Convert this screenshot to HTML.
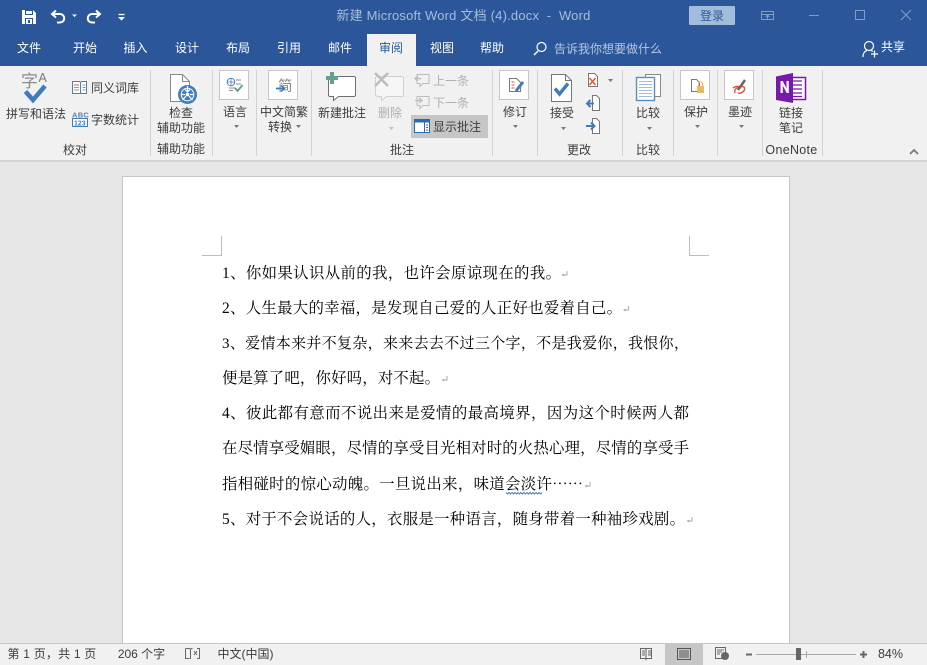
<!DOCTYPE html>
<html lang="zh-CN"><head><meta charset="utf-8"><title>Word</title>
<style>
html,body{margin:0;padding:0;width:927px;height:665px;overflow:hidden;background:#e6e6e6}
body{position:relative;font-family:"Liberation Sans","Noto Sans CJK SC",sans-serif;font-size:12px;color:#3c3c3c}
.b{position:absolute}
.t{position:absolute;transform:translate(-50%,-50%);white-space:nowrap;line-height:16px}
.tab{color:#fff;font-size:12px}
.d{color:#b0b0b0}
.l{position:absolute;left:222px;height:24px;line-height:24px;font-family:"Liberation Serif","Noto Serif CJK SC",serif;font-size:15.4px;color:#000;text-align:justify;text-align-last:justify;white-space:normal;overflow:hidden}
svg{position:absolute;left:0;top:0}
svg text{font-family:"Liberation Sans","Noto Sans CJK SC",sans-serif}
</style></head><body>
<div class="b" style="left:0;top:0;width:927px;height:66px;background:#2b579a"></div>
<div class="b" style="left:367px;top:34px;width:49px;height:32px;background:#f1f1f1"></div>
<div class="b" style="left:0;top:66px;width:927px;height:94px;background:#f1f1f1"></div>
<div class="b" style="left:0;top:160px;width:927px;height:2px;background:#d4d4d4"></div>
<div class="b" style="left:122px;top:176px;width:666px;height:470px;background:#fff;border:1px solid #c6c6c6"></div>
<div class="b" style="left:0;top:643px;width:927px;height:22px;background:#f1f1f1;border-top:1px solid #c6c6c6;box-sizing:border-box"></div>
<div class="b" style="left:665px;top:644px;width:38px;height:21px;background:#c6c6c6"></div>
<div class="b" style="left:411px;top:115px;width:77px;height:23px;background:#c6c6c6"></div>
<div class="b" style="left:689px;top:6px;width:46px;height:19px;background:#a3bcdc;border-radius:1px"></div>

<svg width="927" height="665" viewBox="0 0 927 665" fill="none">
<!-- group separators -->
<g stroke="#d2d2d2"><path d="M150.500 70V156M212.500 70V156M256.500 70V156M311.500 70V156M492.500 70V156M537.500 70V156M622.500 70V156M673.500 70V156M717.500 70V156M762.500 70V156M822.500 70V156"/></g>
<!-- QAT -->
<path d="M22 10h11l3 3v11H22z" fill="#fff"/><rect x="25" y="10" width="8" height="5" fill="#2b579a"/><rect x="26" y="11" width="6" height="3" fill="#fff"/><rect x="25" y="18" width="8" height="6" fill="#2b579a"/><rect x="26" y="19" width="6" height="5" fill="#fff"/><rect x="28" y="20" width="2" height="3" fill="#2b579a"/>
<path d="M56 10.500l-4 3.500 4 3.500M52 14h8a4 4 0 0 1 0 8.500h-3" stroke="#fff" stroke-width="2"/>
<path d="M72 14.500h5l-2.500 2.500z" fill="#fff"/>
<path d="M96 10.500l4 3.500-4 3.500M100 14h-8a4 4 0 0 0 0 8.500h3" stroke="#fff" stroke-width="2"/>
<path d="M118.500 14.500h6" stroke="#fff" stroke-width="1.300"/><path d="M118 17h7l-3.500 3.500z" fill="#fff"/>
<!-- window controls -->
<g stroke="#7f9dc7"><path d="M761.500 11.500h12v8h-12zM761.500 14.500h12M767.500 19v-3M765.500 17l2-2 2 2"/><path d="M809 15.500h10"/><rect x="855.500" y="10.500" width="9" height="9"/><path d="M901 10l10 10M911 10l-10 10"/></g>
<!-- search, user -->
<circle cx="541.500" cy="47" r="4.500" stroke="#fff" stroke-width="1.200"/><path d="M538 51l-4 4" stroke="#fff" stroke-width="1.500"/>
<circle cx="869" cy="46" r="4.500" stroke="#fff" stroke-width="1.200"/><path d="M863 57c0-4 2-6 4-6.500M871 50.500l2 1M871 54h7M874.500 50.500v7" stroke="#fff" stroke-width="1.200"/>
<!-- spell check -->
<text x="21" y="87" font-size="17" fill="#8d8d8d">字</text>
<text x="38.500" y="82" font-size="12.500" fill="#7a7a7a">A</text>
<path d="M25.500 91.500l7.500 8.500 12-14" stroke="#3d7cbe" stroke-width="4.500"/>
<!-- thesaurus -->
<path d="M72.500 81.500h7l1 1 1-1h5v12h-14z" fill="#fff" stroke="#4d82b8"/><path d="M80.500 82v11" stroke="#4d82b8"/>
<path d="M74 85h5" stroke="#d25b3b"/><path d="M74 87.500h5M74 90h5M82.500 85h3M82.500 87.500h3M82.500 90h3" stroke="#999"/>
<!-- word count -->
<text x="72" y="117.500" font-size="7.500" font-weight="bold" fill="#5f7f9f" letter-spacing=".3">ABC</text>
<rect x="72.500" y="118.500" width="15" height="8" fill="#fff" stroke="#3d7cbe"/>
<text x="74" y="125.300" font-size="7" font-weight="bold" fill="#3d7cbe">123</text>
<!-- accessibility -->
<path d="M170.500 74.500h12l7 7v20h-19z" fill="#fff" stroke="#8a8a8a"/><path d="M182.500 74.500v7h7" stroke="#8a8a8a"/>
<circle cx="187.500" cy="94.500" r="9.500" fill="#3f7fbd"/><circle cx="187.500" cy="94.500" r="6.300" stroke="#fff"/><circle cx="187.500" cy="94.500" r="1.800" fill="#fff"/><path d="M187.500 86v6M185 89.500l2.500 2.500 2.500-2.500M181 94.500h4M194 94.500h-4M182.500 100l3.500-4M192.500 100l-3.500-4" stroke="#fff" stroke-width="1.200"/>
<!-- boxed icons -->
<g fill="#fff" stroke="#c6c6c6"><rect x="219.500" y="70.500" width="29" height="29"/><rect x="268.500" y="70.500" width="29" height="29"/><rect x="499.500" y="70.500" width="29" height="29"/><rect x="680.500" y="70.500" width="29" height="29"/><rect x="724.500" y="70.500" width="29" height="29"/></g>
<circle cx="231" cy="82" r="3.800" stroke="#4d82b8"/><path d="M227 82h8M231 78v8" stroke="#4d82b8" stroke-width=".8"/><path d="M236 80h5M236 84h5M229 88h6M229 90.500h4" stroke="#888"/><path d="M235 88l2.500 3 5-6" stroke="#5aa08c" stroke-width="1.800"/>
<text x="278" y="91" font-size="14.500" fill="#8a8a8a">简</text>
<path d="M276 88.500h7" stroke="#3d7cbe" stroke-width="1.800"/><path d="M281 85.500l3.500 3-3.500 3" stroke="#3d7cbe" stroke-width="1.500"/>
<!-- new comment -->
<path d="M329.500 76.500h25l1 1v18l-1 1h-16l-5 4v-4h-4l-1-1v-18z" fill="#fff" stroke="#6e6e6e"/>
<path d="M332 72v12M326 78h12" stroke="#63a08e" stroke-width="4"/>
<!-- delete -->
<path d="M377 76.500h25l1.500 1v18l-1 1h-16l-5 4v-4h-4l-2-1v-18z" fill="#f6f6f6" stroke="#d0d0d0"/>
<path d="M375 73l13 13M388 73l-13 13" stroke="#bdbdbd" stroke-width="2.500"/>
<!-- prev/next -->
<path d="M417 74.500h12v9h-6l-3 3v-3h-3z" stroke="#bdbdbd"/><path d="M415 78.500h6M418 76l-3 2.500 3 2.500" stroke="#bdbdbd" stroke-width="1.400"/>
<path d="M417 96.500h12v9h-6l-3 3v-3h-3z" stroke="#bdbdbd"/><path d="M415 100.500h6M419 98l3 2.500-3 2.500" stroke="#bdbdbd" stroke-width="1.400"/>
<!-- show comments -->
<rect x="414.500" y="119.500" width="15" height="13" fill="#fff" stroke="#2b6cb0"/><path d="M414.500 120h15v2.500h-15z" fill="#2b6cb0"/><path d="M424.500 122v10" stroke="#2b6cb0"/><path d="M426 125h2M426 127.500h2M426 130h2" stroke="#2b6cb0"/>
<!-- track changes -->
<path d="M509.500 78.500h7l4 4v9h-11z" fill="#fff" stroke="#777"/><path d="M511.500 82h3M511.500 85h3M511.500 88h3" stroke="#d25b3b"/><path d="M516 91l7-9" stroke="#3d7cbe" stroke-width="3"/>
<!-- accept -->
<path d="M551.500 74.500h14l6 6v21h-20z" fill="#fff" stroke="#777"/><path d="M565.500 74.500v6h6" stroke="#777"/><path d="M555 88.500l4.500 5.500 8.500-10.500" stroke="#3d7cbe" stroke-width="3.400"/>
<!-- reject -->
<path d="M588.500 73.500h6l3 3v10h-9z" fill="#fff" stroke="#777"/><path d="M589.500 78l6 7M595.500 78l-6 7" stroke="#d25b3b" stroke-width="1.500"/>
<path d="M592.500 95.500h4l3 3v12h-7z" fill="#fff" stroke="#777"/><path d="M587 103.500h7" stroke="#3d7cbe" stroke-width="2"/><path d="M590.500 100l-3.500 3.500 3.500 3.500" stroke="#3d7cbe" stroke-width="2"/>
<path d="M592.500 118.500h4l3 3v12h-7z" fill="#fff" stroke="#777"/><path d="M586 126h8" stroke="#3d7cbe" stroke-width="2"/><path d="M591 122.500l3.500 3.500-3.500 3.500" stroke="#3d7cbe" stroke-width="2"/>
<!-- compare -->
<rect x="645.500" y="74.500" width="15" height="22" fill="#fff" stroke="#888"/>
<rect x="636.500" y="77.500" width="18" height="23" fill="#fff" stroke="#5a8fc2" stroke-width="1.400"/><path d="M639 81.500h13M639 84.500h13M639 87.500h13M639 90.500h13M639 93.500h13M639 96.500h13" stroke="#9dbcdb"/>
<!-- protect -->
<path d="M691.500 79.500h5l3 3v9h-8z" fill="#fff" stroke="#777"/><rect x="697" y="86" width="7" height="7" fill="#e8b96c"/><path d="M698.500 86v-2a2 2 0 0 1 4 0v2" stroke="#e8b96c" stroke-width="1.200"/>
<!-- ink -->
<path d="M735 93c-2-4 5-8 9-6 2 2-1 7-6 6" stroke="#e0573a" stroke-width="1.500"/><path d="M733 88c3-2 6-2 8 0" stroke="#e0573a" stroke-width="1.500"/><path d="M738 90l7-10" stroke="#666" stroke-width="2.500"/>
<!-- OneNote -->
<rect x="790" y="77.500" width="15.500" height="22" fill="#fff" stroke="#7719aa" stroke-width="1.500"/><path d="M793 81h9M793 85h9M793 89h9M793 93h9M793 96.500h9" stroke="#7719aa" stroke-width="1.300"/>
<path d="M776 76.500l17-3.500v30l-17-3z" fill="#7719aa"/><path d="M780.500 93V81h2.300l3.700 7.500V81h2.300v12h-2.200l-3.800-7.500V93z" fill="#fff"/>
<!-- dropdown arrows -->
<g fill="#777"><path d="M234 125h5l-2.500 3zM296 125h5l-2.500 3zM513 125h5l-2.500 3zM561 127h5l-2.500 3zM647 127h5l-2.500 3zM695 125h5l-2.500 3zM739 125h5l-2.500 3zM608 79h5l-2.500 3z"/><path d="M389 127h5l-2.500 3z" fill="#c0c0c0"/></g>
<path d="M910 154l4-4 4 4" stroke="#777" stroke-width="1.800"/>
<!-- crop marks -->
<path d="M221.500 236v19.500H202M689.500 236v19.500H709" stroke="#bdbdbd"/>
<!-- pilcrows -->
<g stroke="#aaa"><path d="M567 271v4h-4M564 274l-1.500 1 1.500 1M628.500 306v4h-4M625.500 309l-1.500 1 1.500 1M447 376v4h-4M444 379l-1.500 1 1.500 1M590 482v4h-4M587 485l-1.500 1 1.500 1M692 517v4h-4M689 520l-1.500 1 1.500 1"/></g>
<!-- wavy -->
<path d="M506 492.500l1.500 1.500 1.500-1.500 1.500 1.500 1.500-1.500 1.500 1.500 1.500-1.500 1.500 1.500 1.500-1.500 1.500 1.500 1.500-1.500 1.500 1.500 1.500-1.500 1.500 1.500 1.500-1.500 1.500 1.500 1.500-1.500 1.500 1.500 1.500-1.500 1.500 1.500 1.500-1.500 1.500 1.500 1.500-1.500 1.500 1.500 1.500-1.500" stroke="#4a7fd0"/>
<!-- status icons -->
<path d="M185.500 648.500h4l1 1 1-1h1M190.500 649v10M185.500 648.500v10h4M197 648.500h2.500v10H197" stroke="#666"/><path d="M194 651l3 4M197 651l-3 4" stroke="#666"/>
<path d="M640.500 648.500h5l.5 1 .5-1h5v10h-5l-.5 1-.5-1h-5zM646 649v10" stroke="#666"/><path d="M642 651h3M642 653h3M642 655h3M648 651h3M648 653h3M648 655h3" stroke="#666"/>
<rect x="677.500" y="648.500" width="13" height="11" stroke="#555"/><path d="M679 651h10M679 653h10M679 655h10M679 657h10" stroke="#555"/>
<path d="M715.500 647.500h10v8h-3v3h-7z" stroke="#666"/><path d="M717 650h7M717 652h5M717 654h3" stroke="#666"/><circle cx="725" cy="656" r="4" fill="#666"/>
<path d="M746 654.500h6" stroke="#666" stroke-width="2"/><path d="M756 654.500h100" stroke="#a8a8a8"/><path d="M806.500 651v7" stroke="#a8a8a8"/><rect x="796" y="648" width="5" height="12" fill="#666"/><path d="M860 654.500h7M863.500 651v7" stroke="#666" stroke-width="2"/>
</svg>

<!-- title bar -->
<div class="t" style="left:463.500px;top:16px;color:#a9bcd8;font-size:13px;letter-spacing:.2px">新建 Microsoft Word 文档 (4).docx&nbsp; -&nbsp; Word</div>
<div class="t" style="left:712px;top:16px;color:#2b579a;font-size:12px">登录</div>
<div class="t tab" style="left:29px;top:48px">文件</div>
<div class="t tab" style="left:85px;top:48px">开始</div>
<div class="t tab" style="left:135.500px;top:48px">插入</div>
<div class="t tab" style="left:187px;top:48px">设计</div>
<div class="t tab" style="left:238px;top:48px">布局</div>
<div class="t tab" style="left:289px;top:48px">引用</div>
<div class="t tab" style="left:340px;top:48px">邮件</div>
<div class="t tab" style="left:391px;top:48px;color:#2b579a">审阅</div>
<div class="t tab" style="left:442px;top:48px">视图</div>
<div class="t tab" style="left:492px;top:48px">帮助</div>
<div class="t tab" style="left:608px;top:49px;color:#b5c5df">告诉我你想要做什么</div>
<div class="t tab" style="left:893px;top:47px">共享</div>

<!-- ribbon labels -->
<div class="t" style="left:36px;top:114px">拼写和语法</div>
<div class="t" style="left:115px;top:88px">同义词库</div>
<div class="t" style="left:115px;top:120px">字数统计</div>
<div class="t" style="left:75px;top:150px">校对</div>
<div class="t" style="left:181px;top:113px">检查</div>
<div class="t" style="left:181px;top:128px">辅助功能</div>
<div class="t" style="left:181px;top:149px">辅助功能</div>
<div class="t" style="left:235px;top:112px">语言</div>
<div class="t" style="left:284px;top:112px">中文简繁</div>
<div class="t" style="left:280px;top:127px">转换</div>
<div class="t" style="left:342px;top:113px">新建批注</div>
<div class="t d" style="left:390px;top:113px">删除</div>
<div class="t d" style="left:451px;top:81px">上一条</div>
<div class="t d" style="left:451px;top:103px">下一条</div>
<div class="t" style="left:457px;top:127px">显示批注</div>
<div class="t" style="left:402px;top:150px">批注</div>
<div class="t" style="left:515px;top:112px">修订</div>
<div class="t" style="left:562px;top:113px">接受</div>
<div class="t" style="left:579px;top:150px">更改</div>
<div class="t" style="left:648px;top:113px">比较</div>
<div class="t" style="left:648px;top:150px">比较</div>
<div class="t" style="left:696px;top:112px">保护</div>
<div class="t" style="left:740px;top:112px">墨迹</div>
<div class="t" style="left:791px;top:113px">链接</div>
<div class="t" style="left:791px;top:128px">笔记</div>
<div class="t" style="left:791.500px;top:150px;font-size:12.500px;letter-spacing:.3px">OneNote</div>

<!-- document -->
<div class="l" style="top:262px;width:339px">1、你如果认识从前的我，也许会原谅现在的我。</div>
<div class="l" style="top:297px;width:400px">2、人生最大的幸福，是发现自己爱的人正好也爱着自己。</div>
<div class="l" style="top:332px;width:467px;font-size:15px">3、爱情本来并不复杂，来来去去不过三个字，不是我爱你，我恨你，</div>
<div class="l" style="top:367px;width:218px">便是算了吧，你好吗，对不起。</div>
<div class="l" style="top:402px;width:467px">4、彼此都有意而不说出来是爱情的最高境界，因为这个时候两人都</div>
<div class="l" style="top:437px;width:467px">在尽情享受媚眼，尽情的享受目光相对时的火热心理，尽情的享受手</div>
<div class="l" style="top:471px;width:361px">指相碰时的惊心动魄。一旦说出来，味道会淡许<span style="font-family:'Noto Serif CJK SC',serif">……</span></div>
<div class="l" style="top:508px;width:463px">5、对于不会说话的人，衣服是一种语言，随身带着一种袖珍戏剧。</div>

<!-- status -->
<div class="t" style="left:52px;top:654px;letter-spacing:.2px">第 1 页，共 1 页</div>
<div class="t" style="left:141.500px;top:654px">206 个字</div>
<div class="t" style="left:245.500px;top:654px">中文(中国)</div>
<div class="t" style="left:890.500px;top:654px;font-size:12.500px">84%</div>
</body></html>
